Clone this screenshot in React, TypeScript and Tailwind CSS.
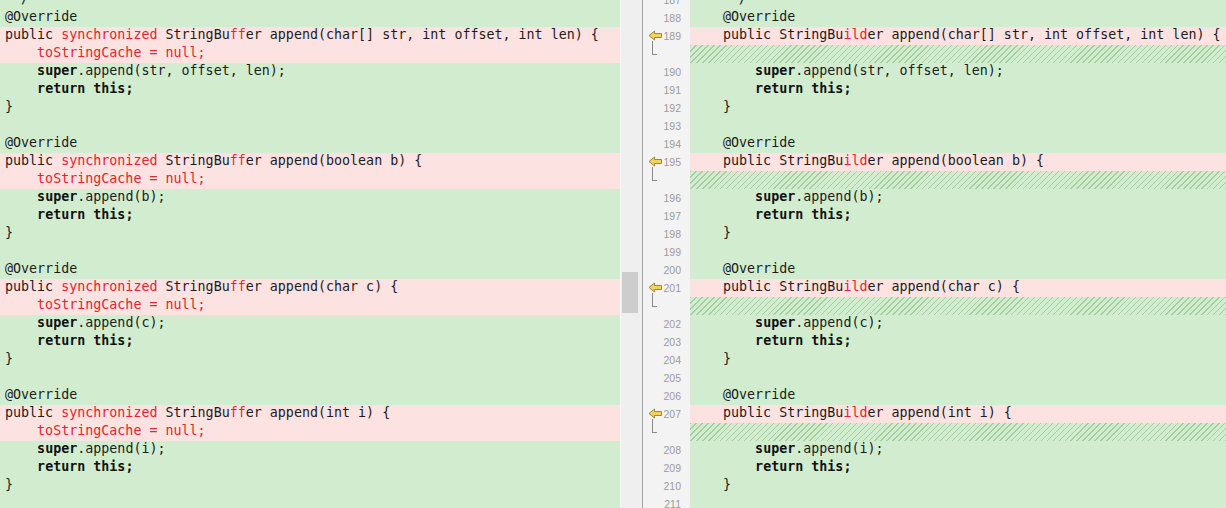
import React from "react";

type Seg = { t: string; c?: "r" | "b" };
type Row = { kind: "g" | "r" | "h"; segs: Seg[]; num?: number };

const txt = (t: string): Seg[] => [{ t }];

const leftRows: Row[] = [];
const rightRows: Row[] = [];

const pushL = (kind: "g" | "r", segs: Seg[]) => leftRows.push({ kind, segs });
const pushR = (kind: "g" | "r" | "h", segs: Seg[], num?: number) =>
  rightRows.push({ kind, segs, num });

const sigs = ["char[] str, int offset, int len", "boolean b", "char c", "int i"];
const args = ["str, offset, len", "b", "c", "i"];

pushL("g", txt(" */"));
pushR("g", txt(" */"), 187);

let n = 188;
sigs.forEach((sig, i) => {
  pushL("g", txt("@Override"));
  pushL("r", [
    { t: "public " },
    { t: "synchronized", c: "r" },
    { t: " StringBu" },
    { t: "ff", c: "r" },
    { t: `er append(${sig}) {` },
  ]);
  pushL("r", [{ t: "    toStringCache = null;", c: "r" }]);
  pushL("g", [{ t: "    " }, { t: "super", c: "b" }, { t: `.append(${args[i]});` }]);
  pushL("g", [{ t: "    " }, { t: "return this;", c: "b" }]);
  pushL("g", txt("}"));
  if (i < 3) pushL("g", txt(""));

  pushR("g", txt("@Override"), n++);
  pushR(
    "r",
    [{ t: "public StringBu" }, { t: "ild", c: "r" }, { t: `er append(${sig}) {` }],
    n++
  );
  pushR("h", []);
  pushR("g", [{ t: "    " }, { t: "super", c: "b" }, { t: `.append(${args[i]});` }], n++);
  pushR("g", [{ t: "    " }, { t: "return this;", c: "b" }], n++);
  pushR("g", txt("}"), n++);
  if (i < 3) pushR("g", txt(""), n++);
});
pushL("g", txt(""));
pushR("g", txt(""), n++);

const rowBg = (k: Row["kind"]) =>
  k === "r"
    ? "bg-[#fde2e2]"
    : k === "h"
    ? "bg-[#d2ecd0] bg-[image:repeating-linear-gradient(135deg,#a3cf9f_0px,#a3cf9f_1px,transparent_1px,transparent_4.2px)]"
    : "bg-[#d2ecd0]";

function Segs({ segs }: { segs: Seg[] }) {
  return (
    <>
      {segs.map((s, i) => (
        <span
          key={i}
          className={
            s.c === "r" ? "text-[#e0262e]" : s.c === "b" ? "font-bold text-[#111]" : "text-[#1c1c1c]"
          }
        >
          {s.t}
        </span>
      ))}
    </>
  );
}

function Arrow() {
  return (
    <svg width="15" height="11" viewBox="0 0 15 11" className="absolute left-[5px] top-[3px]">
      <path
        d="M1 5.5 L6.5 1 L6.5 3.5 L13.5 3.5 L13.5 7.5 L6.5 7.5 L6.5 10 Z"
        fill="#f3d25a"
        stroke="#9c8a3a"
        strokeWidth="1"
        strokeLinejoin="round"
      />
    </svg>
  );
}

export default function App() {
  const mono = "font-['DejaVu_Sans_Mono','Liberation_Mono',monospace] text-[13.33px]";
  return (
    <div className="w-[1226px] h-[508px] overflow-hidden flex bg-white">
      {/* left pane */}
      <div className={`w-[620px] shrink-0 overflow-hidden ${mono}`}>
        <div className="-mt-[9px]">
          {leftRows.map((r, i) => (
            <div
              key={i}
              className={`h-[18px] leading-[16px] pl-[5px] whitespace-pre ${rowBg(r.kind)}`}
            >
              <Segs segs={r.segs} />
            </div>
          ))}
        </div>
      </div>
      {/* scrollbar area */}
      <div className="w-[22px] shrink-0 bg-[#efefef] border-l border-[#f8f8f8] pt-[272px] pl-[1px]">
        <div className="w-[16px] h-[41px] bg-[#cdcdcd]" />
      </div>
      {/* separator */}
      <div className="w-px shrink-0 bg-[#a3a3a3]" />
      {/* gutter */}
      <div className="w-[47px] shrink-0 bg-[#f3f3f3] overflow-hidden">
        <div className="-mt-[9px]">
          {rightRows.map((r, i) => (
            <div
              key={i}
              className="relative h-[18px] leading-[18px] pr-[9px] text-right font-['Liberation_Sans',Arial,sans-serif] text-[10.5px] text-[#9b9b9b]"
            >
              {r.num ?? ""}
              {r.kind === "r" && <Arrow />}
              {r.kind === "h" && (
                <div className="absolute left-[9px] -top-[4px] w-[5px] h-[14px] border-l border-b border-[#8a8a8a]" />
              )}
            </div>
          ))}
        </div>
      </div>
      {/* right pane */}
      <div className={`flex-1 overflow-hidden ${mono}`}>
        <div className="-mt-[9px]">
          {rightRows.map((r, i) => (
            <div
              key={i}
              className={`h-[18px] leading-[16px] pl-[33px] whitespace-pre ${rowBg(r.kind)}`}
            >
              <Segs segs={r.segs} />
            </div>
          ))}
        </div>
      </div>
    </div>
  );
}
